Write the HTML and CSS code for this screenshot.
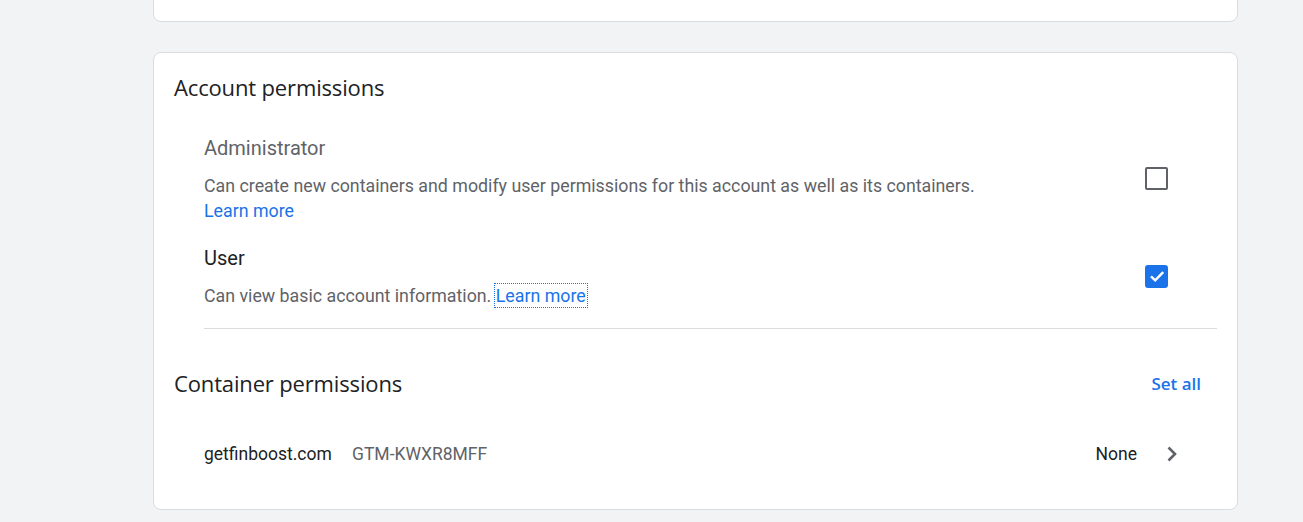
FILE: index.html
```html
<!DOCTYPE html>
<html>
<head>
<meta charset="utf-8">
<link rel="stylesheet" href="styles.css">
</head>
<body>
<div class="page">
  <div class="card card-top"></div>
  <div class="card">
    <h2 class="card-title">Account permissions</h2>
    <div class="perm">
      <div class="perm-text">
        <div class="perm-name muted">Administrator</div>
        <div class="perm-desc">Can create new containers and modify user permissions for this account as well as its containers.<br><a class="link" href="#">Learn more</a></div>
      </div>
      <span class="checkbox"></span>
    </div>
    <div class="perm perm-user">
      <div class="perm-text">
        <div class="perm-name">User</div>
        <div class="perm-desc">Can view basic account information. <a class="link focused" href="#">Learn more</a></div>
      </div>
      <span class="checkbox checked">
        <svg width="22" height="22" viewBox="0 0 22 22"><path d="M5 11.3 L9.2 15.3 L17.2 7.2" fill="none" stroke="#fff" stroke-width="2.5"/></svg>
      </span>
    </div>
    <div class="divider"></div>
    <div class="section-head">
      <h2 class="card-title">Container permissions</h2>
      <a class="set-all" href="#">Set all</a>
    </div>
    <div class="container-row">
      <span class="c-name">getfinboost.com</span>
      <span class="c-id">GTM-KWXR8MFF</span>
      <span class="c-role">None</span>
      <svg class="chevron" width="12" height="16" viewBox="0 0 12 16"><path d="M2.5 1.5 L9 8 L2.5 14.5" fill="none" stroke="#5f6368" stroke-width="2.6"/></svg>
    </div>
  </div>
</div>
</body>
</html>
```

FILE: styles.css
```css
html, body {
  margin: 0;
  padding: 0;
  background: #f1f3f4;
  font-family: Roboto, "Liberation Sans", sans-serif;
  color: #202124;
}
.page {
  margin-left: 153px;
  width: 1085px;
  margin-top: -40px;
  display: flex;
  flex-direction: column;
  gap: 30px;
}
.card {
  box-sizing: border-box;
  background: #fff;
  border: 1px solid #dadce0;
  border-radius: 8px;
  padding: 22px 20px 0 20px;
}
.card-top {
  height: 62px;
  padding: 0;
}
.card-title {
  margin: 0;
  font-family: "Open Sans", sans-serif;
  font-weight: 400;
  font-size: 22px;
  line-height: 24px;
  color: #202124;
  letter-spacing: -0.15px;
}
.perm {
  display: flex;
  align-items: center;
  padding-left: 30px;
  margin-top: 37px;
}
.perm-user {
  margin-top: 23px;
}
.perm-text {
  flex: 1;
}
.perm-name {
  font-size: 20px;
  line-height: 24px;
  color: #202124;
}
.perm-name.muted {
  color: #5f6368;
}
.perm-desc {
  margin-top: 13px;
  font-size: 17.8px;
  line-height: 25px;
  color: #5f6368;
}
.link {
  color: #1a73e8;
  text-decoration: none;
}
.link.focused {
  outline: 1px dotted #1a73e8;
  outline-offset: 1px;
}
.checkbox {
  box-sizing: border-box;
  width: 23px;
  height: 23px;
  border: 2px solid #5f6368;
  border-radius: 2px;
  margin-right: 49px;
  margin-left: 40px;
  margin-bottom: 2px;
  display: flex;
  align-items: center;
  justify-content: center;
  flex-shrink: 0;
}
.checkbox.checked {
  background: #1a73e8;
  border-color: #1a73e8;
  border-radius: 3px;
}
.checkbox svg {
  display: block;
  flex-shrink: 0;
}
.divider {
  margin: 20px 0 0 30px;
  border-top: 1px solid #dadce0;
}
.section-head {
  display: flex;
  align-items: center;
  justify-content: space-between;
  margin-top: 42px;
}
.set-all {
  font-family: "Open Sans", sans-serif;
  font-weight: 600;
  font-size: 17px;
  color: #1a73e8;
  text-decoration: none;
  margin-right: 16px;
}
.container-row {
  display: flex;
  align-items: center;
  height: 48px;
  margin-top: 35px;
  margin-bottom: 31px;
  padding-left: 30px;
  font-size: 17.5px;
}
.c-name {
  color: #202124;
  width: 148px;
}
.c-id {
  color: #5f6368;
  flex: 1;
}
.c-role {
  color: #202124;
  margin-right: 29px;
}
.chevron {
  margin-right: 39px;
}
```
